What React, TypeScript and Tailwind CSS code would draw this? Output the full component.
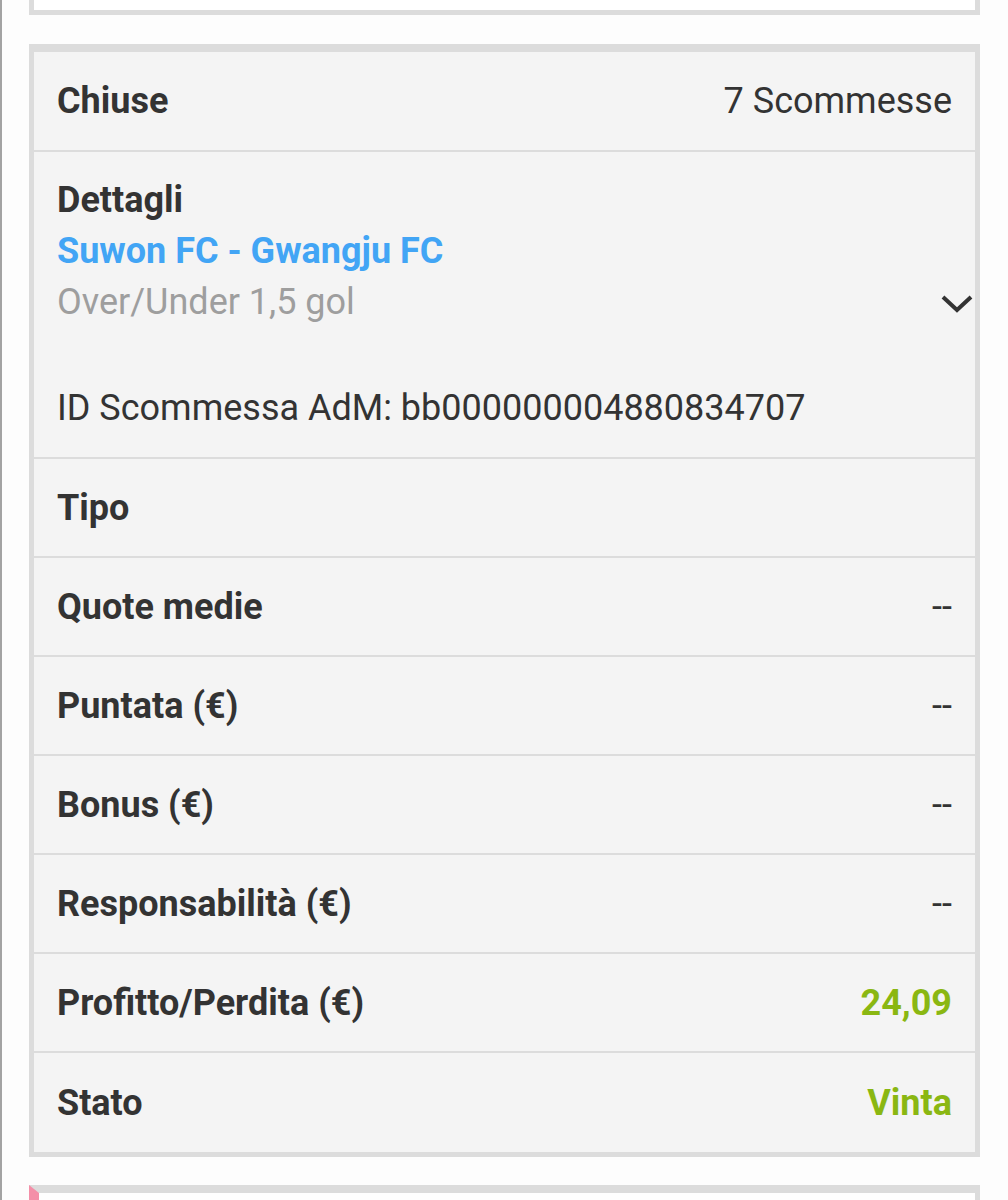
import React from 'react';

type Row = {
  label: string;
  value?: string;
  tone?: 'plain' | 'green';
};

const rows: Row[] = [
  { label: 'Tipo' },
  { label: 'Quote medie', value: '--' },
  { label: 'Puntata (€)', value: '--' },
  { label: 'Bonus (€)', value: '--' },
  { label: 'Responsabilità (€)', value: '--' },
  { label: 'Profitto/Perdita (€)', value: '24,09', tone: 'green' },
  { label: 'Stato', value: 'Vinta', tone: 'green' },
];

const Chevron: React.FC = () => (
  <svg width="32" height="20" viewBox="0 0 32 20" fill="none">
    <path d="M2 3 L16 16 L30 3" stroke="#333333" strokeWidth="4" strokeLinecap="butt" strokeLinejoin="miter" />
  </svg>
);

const App: React.FC = () => {
  return (
    <div
      className="min-h-screen bg-[#fdfdfd] border-l-2 border-[#a3a3a3] text-[#333333]"
      style={{ fontFamily: 'Roboto, "Liberation Sans", sans-serif' }}
    >
      <div className="pl-[27px] pr-[28px]">
        {/* end of the card above */}
        <div className="h-[15px] bg-white border-x-[5px] border-b-[5px] border-[#dcdcdc]" />

        {/* bet card */}
        <div className="mt-[29px] border-[5px] border-t-[8px] border-[#dcdcdc] bg-[#f4f4f4] text-[36px]">
          <div className="h-[100px] px-[23px] flex items-center justify-between border-b-2 border-[#dcdcdc]">
            <span className="font-bold">Chiuse</span>
            <span>7 Scommesse</span>
          </div>

          <div className="relative h-[307px] px-[23px] pt-[23px] border-b-2 border-[#dcdcdc] leading-[51px]">
            <div className="font-bold">Dettagli</div>
            <div className="font-bold text-[#42a5f5]">Suwon FC - Gwangju FC</div>
            <div className="text-[#9e9e9e]">Over/Under 1,5 gol</div>
            <div className="mt-[55px]">ID Scommessa AdM: bb000000004880834707</div>
            <div className="absolute right-[2px] top-[142px]">
              <Chevron />
            </div>
          </div>

          {rows.map((r, i) => (
            <div
              key={r.label}
              className={
                'h-[99px] px-[23px] flex items-center justify-between ' +
                (i < rows.length - 1 ? 'border-b-2 border-[#dcdcdc]' : '')
              }
            >
              <span className="font-bold">{r.label}</span>
              {r.value && (
                <span className={r.tone === 'green' ? 'font-bold text-[#8ab712]' : 'text-[#333333]'}>
                  {r.value}
                </span>
              )}
            </div>
          ))}
        </div>

        {/* start of the next card */}
        <div className="mt-[28px] h-[60px] bg-white border-t-[8px] border-l-[10px] border-r-[5px] border-t-[#dcdcdc] border-r-[#dcdcdc] border-l-[#f48fa8]" />
      </div>
    </div>
  );
};

export default App;
